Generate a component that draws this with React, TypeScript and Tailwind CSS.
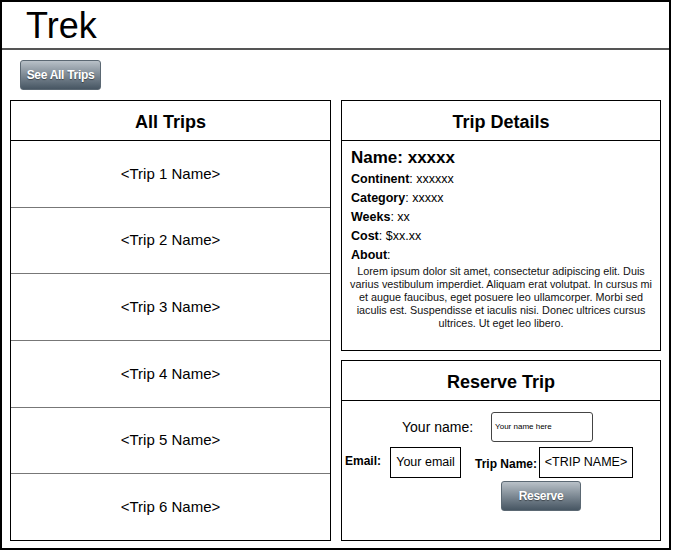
import React from "react";

const trips = ["<Trip 1 Name>", "<Trip 2 Name>", "<Trip 3 Name>", "<Trip 4 Name>", "<Trip 5 Name>", "<Trip 6 Name>"];

const details = [
  ["Continent", "xxxxxx"],
  ["Category", "xxxxx"],
  ["Weeks", "xx"],
  ["Cost", "$xx.xx"],
];

function GrayButton({ label, className = "" }: { label: string; className?: string }) {
  return (
    <button
      className={`rounded-[3px] border border-[#5b6873] bg-linear-to-b from-[#b9c1c8] to-[#475663] text-[12px] font-bold tracking-[-0.3px] text-white [text-shadow:0_1px_1px_rgba(0,0,0,0.45)] ${className}`}
    >
      {label}
    </button>
  );
}

function PanelHeader({ title }: { title: string }) {
  return (
    <div className="flex h-[40px] shrink-0 items-center justify-center border-b border-black pt-[4px] text-[18px] font-bold">
      {title}
    </div>
  );
}

export default function App() {
  return (
    <div className="h-[552px] w-[673px] bg-white font-['Liberation_Sans',Arial,sans-serif] text-black">
      <div className="flex h-[550px] w-[671px] flex-col border-2 border-black">
        <header className="flex h-[48px] shrink-0 items-center border-b-2 border-[#555] pl-[24px] pt-[2px] text-[36px] leading-none">
          Trek
        </header>

        <div className="flex flex-1 flex-col px-[8px] pt-[10px]">
          <GrayButton label="See All Trips" className="ml-[10px] h-[30px] w-[81px]" />

          <div className="mt-[10px] flex gap-[10px]">
            <section className="flex h-[441px] w-[321px] flex-col border border-black">
              <PanelHeader title="All Trips" />
              <ul className="flex flex-1 flex-col">
                {trips.map((t, i) => (
                  <li
                    key={t}
                    className={`flex flex-1 items-center justify-center text-[15px] ${i < trips.length - 1 ? "border-b border-[#777]" : ""}`}
                  >
                    {t}
                  </li>
                ))}
              </ul>
            </section>

            <div className="flex w-[320px] flex-col">
              <section className="flex h-[251px] flex-col border border-black">
                <PanelHeader title="Trip Details" />
                <div className="px-[9px] pt-[7px]">
                  <p className="text-[17px] leading-[20px] font-bold">Name: xxxxx</p>
                  <div className="mt-[2px] flex flex-col">
                    {details.map(([k, v]) => (
                      <p key={k} className="text-[12.5px] leading-[19px]">
                        <b>{k}</b>: {v}
                      </p>
                    ))}
                    <p className="text-[12.5px] leading-[19px]">
                      <b>About</b>:
                    </p>
                  </div>
                </div>
                <p className="px-[1px] text-center text-[10.8px] leading-[13px] whitespace-nowrap text-[#111]">
                  Lorem ipsum dolor sit amet, consectetur adipiscing elit. Duis
                  <br />
                  varius vestibulum imperdiet. Aliquam erat volutpat. In cursus mi
                  <br />
                  et augue faucibus, eget posuere leo ullamcorper. Morbi sed
                  <br />
                  iaculis est. Suspendisse et iaculis nisi. Donec ultrices cursus
                  <br />
                  ultrices. Ut eget leo libero.
                </p>
              </section>

              <section className="mt-[9px] flex h-[181px] flex-col border border-black">
                <PanelHeader title="Reserve Trip" />
                <div className="flex flex-col pt-[11px]">
                  <div className="flex items-center">
                    <span className="ml-[60px] text-[14px]">Your name:</span>
                    <div className="ml-[18px] flex h-[30px] w-[102px] items-center rounded-[3px] border border-[#444] pl-[3px] text-[8px]">
                      Your name here
                    </div>
                  </div>
                  <div className="mt-[5px] flex items-start">
                    <span className="ml-[3px] mt-[5px] text-[12px] font-bold">Email:</span>
                    <div className="ml-[9px] flex h-[31px] w-[71px] items-center justify-center border border-black text-[12.5px]">
                      Your email
                    </div>
                    <span className="ml-[14px] mt-[8px] text-[12px] font-bold">Trip Name:</span>
                    <div className="ml-[2px] flex h-[31px] w-[94px] items-center justify-center border border-black text-[12.5px]">
                      &lt;TRIP NAME&gt;
                    </div>
                  </div>
                  <GrayButton label="Reserve" className="ml-[159px] mt-[3px] h-[30px] w-[80px]" />
                </div>
              </section>
            </div>
          </div>
        </div>
      </div>
    </div>
  );
}
